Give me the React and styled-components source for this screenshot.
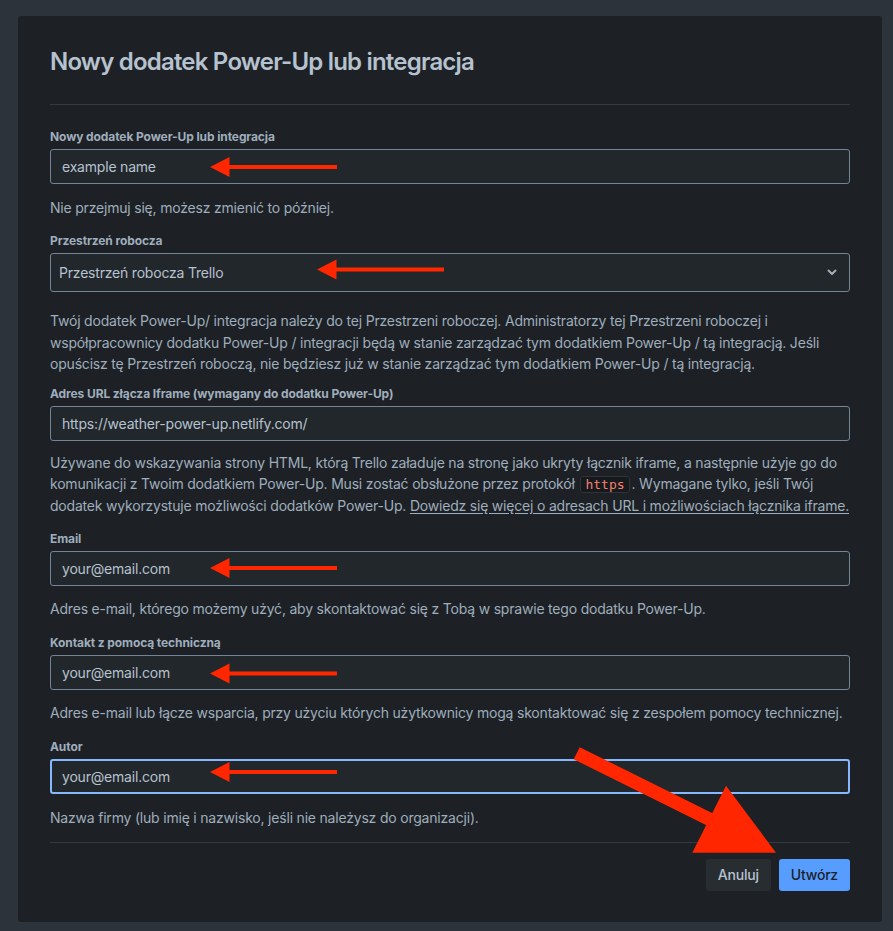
import React from "react";
import styled, { createGlobalStyle } from "styled-components";

const GlobalStyle = createGlobalStyle`
  html, body { margin: 0; padding: 0; background: #2c333a; }
  body { font-family: Inter, "Noto Sans", sans-serif; -webkit-font-smoothing: antialiased; }
  * { box-sizing: border-box; }
`;

const Page = styled.div`
  position: relative;
  width: 893px;
  min-height: 931px;
  padding: 16px 11px 9px 18px;
`;

const Modal = styled.div`
  width: 864px;
  background: #1d2125;
  border-radius: 3px;
  padding: 32px 32px 31px;
`;

const Header = styled.header`
  padding-bottom: 28px;
  border-bottom: 1px solid #343a40;
`;

const Title = styled.h1`
  margin: 0;
  font-size: 24px;
  line-height: 28px;
  font-weight: 600;
  letter-spacing: -0.8px;
  color: #b6c2cf;
`;

const Body = styled.div`
  padding: 24px 0 14px;
  border-bottom: 1px solid #343a40;
`;

const Field = styled.div`
  margin-top: ${(p) => p.$mt ?? 15}px;
  &:first-child { margin-top: 0; }
`;

const Label = styled.label`
  display: block;
  font-size: 12px;
  line-height: 16px;
  font-weight: 700;
  color: #9fadbc;
  margin-bottom: 4px;
  letter-spacing: -0.1px;
`;

const Input = styled.div`
  height: ${(p) => (p.$tall ? 39 : 35)}px;
  display: flex;
  align-items: center;
  justify-content: space-between;
  padding: 0 ${(p) => (p.$tall ? 12 : 11)}px 0 ${(p) => (p.$tall ? 8 : 11)}px;
  background: #22272b;
  border: ${(p) => (p.$focused ? "2px solid #85b8ff" : "1px solid #738496")};
  border-radius: 3px;
  font-size: 14px;
  color: #b6c2cf;
  letter-spacing: -0.2px;
  ${(p) => (p.$focused ? "padding-left: 10px;" : "")}
`;

const Help = styled.p`
  margin: ${(p) => p.$mt ?? 12}px 0 0;
  font-size: 14px;
  line-height: 21.3px;
  color: #9fadbc;
  letter-spacing: -0.2px;
`;

const Code = styled.code`
  font-family: "DejaVu Sans Mono", "Liberation Mono", monospace;
  font-size: 13px;
  line-height: 1;
  color: #f87f72;
  background: #161a1d;
  border: 1px solid #2c333a;
  border-radius: 3px;
  padding: 0 4px;
  margin: 0 2px;
  letter-spacing: 0;
`;

const Link = styled.a`
  color: #9fadbc;
  text-decoration: underline;
  text-underline-offset: 2px;
`;

const Footer = styled.footer`
  display: flex;
  justify-content: flex-end;
  gap: 8px;
  padding-top: 16px;
`;

const Button = styled.button`
  height: 32px;
  padding: 0 12px;
  border: none;
  border-radius: 3px;
  font-family: inherit;
  font-size: 14px;
  font-weight: 500;
  letter-spacing: -0.2px;
  cursor: pointer;
  background: ${(p) => (p.$primary ? "#579dff" : "#282d32")};
  color: ${(p) => (p.$primary ? "#1d2125" : "#b6c2cf")};
`;

const Overlay = styled.svg`
  position: absolute;
  left: 0;
  top: 0;
  width: 893px;
  height: 931px;
  pointer-events: none;
`;

const Chevron = () => (
  <svg width="10" height="7" viewBox="0 0 10 7">
    <path d="M1.5 1.5 L5 5 L8.5 1.5" fill="none" stroke="#9fadbc" strokeWidth="2" strokeLinecap="round" strokeLinejoin="round" />
  </svg>
);

const RED = "#ff2600";

const SmallArrow = ({ tip, y, end }) => (
  <g fill={RED}>
    <polygon points={`${tip},${y} ${tip + 19.5},${y - 10} ${tip + 19.5},${y + 10}`} />
    <rect x={tip + 18} y={y - 2} width={end - tip - 18} height="4" />
  </g>
);

const Annotations = () => (
  <Overlay viewBox="0 0 893 931">
    <SmallArrow tip={210} y={167} end={337} />
    <SmallArrow tip={317} y={269.5} end={444} />
    <SmallArrow tip={210} y={568} end={337} />
    <SmallArrow tip={210} y={673.5} end={337} />
    <SmallArrow tip={210} y={772} end={337} />
    <line x1="576.7" y1="753.2" x2="712" y2="820.5" stroke={RED} strokeWidth="13.5" />
    <polygon points="726,785.7 692.3,852.7 776,852.7" fill={RED} />
  </Overlay>
);

export default function App() {
  return (
    <Page>
      <GlobalStyle />
      <Modal>
        <Header>
          <Title>Nowy dodatek Power-Up lub integracja</Title>
        </Header>
        <Body>
          <Field>
            <Label>Nowy dodatek Power-Up lub integracja</Label>
            <Input>example name</Input>
            <Help $mt={13}>Nie przejmuj się, możesz zmienić to później.</Help>
          </Field>
          <Field>
            <Label>Przestrzeń robocza</Label>
            <Input $tall>
              <span>Przestrzeń robocza Trello</span>
              <Chevron />
            </Input>
            <Help $mt={18}>
              Twój dodatek Power-Up/ integracja należy do tej Przestrzeni roboczej. Administratorzy tej Przestrzeni roboczej i
              współpracownicy dodatku Power-Up / integracji będą w stanie zarządzać tym dodatkiem Power-Up / tą integracją. Jeśli
              opuścisz tę Przestrzeń roboczą, nie będziesz już w stanie zarządzać tym dodatkiem Power-Up / tą integracją.
            </Help>
          </Field>
          <Field $mt={12}>
            <Label>Adres URL złącza Iframe (wymagany do dodatku Power-Up)</Label>
            <Input>https://weather-power-up.netlify.com/</Input>
            <Help $mt={11}>
              Używane do wskazywania strony HTML, którą Trello załaduje na stronę jako ukryty łącznik iframe, a następnie użyje go do
              komunikacji z Twoim dodatkiem Power-Up. Musi zostać obsłużone przez protokół <Code>https</Code>. Wymagane tylko, jeśli Twój
              dodatek wykorzystuje możliwości dodatków Power-Up.{" "}
              <Link href="#">Dowiedz się więcej o adresach URL i możliwościach łącznika iframe.</Link>
            </Help>
          </Field>
          <Field $mt={15}>
            <Label>Email</Label>
            <Input>your@email.com</Input>
            <Help>Adres e-mail, którego możemy użyć, aby skontaktować się z Tobą w sprawie tego dodatku Power-Up.</Help>
          </Field>
          <Field $mt={16}>
            <Label>Kontakt z pomocą techniczną</Label>
            <Input>your@email.com</Input>
            <Help>Adres e-mail lub łącze wsparcia, przy użyciu których użytkownicy mogą skontaktować się z zespołem pomocy technicznej.</Help>
          </Field>
          <Field>
            <Label>Autor</Label>
            <Input $focused>your@email.com</Input>
            <Help $mt={13}>Nazwa firmy (lub imię i nazwisko, jeśli nie należysz do organizacji).</Help>
          </Field>
        </Body>
        <Footer>
          <Button>Anuluj</Button>
          <Button $primary>Utwórz</Button>
        </Footer>
      </Modal>
      <Annotations />
    </Page>
  );
}
